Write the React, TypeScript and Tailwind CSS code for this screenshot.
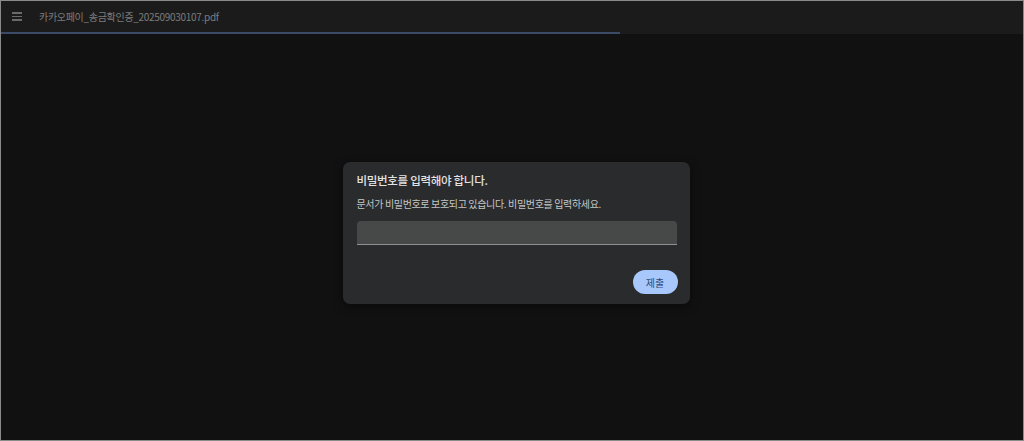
import { useState } from "react";

const font = { fontFamily: '"Noto Sans CJK KR", "Noto Sans", sans-serif' };

export default function App() {
  const [pw, setPw] = useState("");

  return (
    <div className="h-[441px] w-full overflow-hidden border border-[#8a8a8a] bg-[#111111]" style={font}>
      {/* toolbar */}
      <div className="relative h-[33px] bg-[#1b1b1b]">
        <div className="flex h-[31px] items-center">
          <button className="ml-[11px] flex h-[14px] w-[12px] flex-col justify-center gap-[2px]">
            <span className="h-[1.5px] w-[10px] bg-[#6a6a6a]" />
            <span className="h-[1.5px] w-[10px] bg-[#6a6a6a]" />
            <span className="h-[1.5px] w-[10px] bg-[#6a6a6a]" />
          </button>
          <span className="ml-[15px] text-[10px] tracking-[-0.3px] text-[#7d7d7d]">카카오페이_송금확인증_202509030107.pdf</span>
        </div>
        <div className="absolute bottom-0 left-0 h-[2px] w-[619px] bg-[#3b4a66]" />
      </div>

      {/* body */}
      <div className="flex h-[406px] justify-center pl-[8px] pt-[128px]">
        <div className="h-[142px] w-[347px] rounded-[7px] bg-[#2a2b2d] px-[14px] pt-[11px] shadow-[0_2px_10px_rgba(0,0,0,0.5)]">
          <h2 className="text-[11.5px] font-medium leading-[14px] tracking-[-0.3px] text-[#e3e3e3]">비밀번호를 입력해야 합니다.</h2>
          <p className="mt-[11px] text-[10px] leading-[12px] tracking-[-0.35px] text-[#c4c7c5]">문서가 비밀번호로 보호되고 있습니다. 비밀번호를 입력하세요.</p>
          <input
            type="password"
            value={pw}
            onChange={(e) => setPw(e.target.value)}
            className="mt-[11px] block h-[24px] w-[320px] rounded-t-[4px] border-b border-[#8e918f] bg-[#474948] px-2 text-[11px] text-[#e3e3e3] outline-none"
          />
          <div className="mt-[25px] flex justify-end">
            <button className="-mr-[2px] h-[24px] w-[45px] rounded-full bg-[#a8c7fa] text-[10px] text-[#2c4a7c]">제출</button>
          </div>
        </div>
      </div>
    </div>
  );
}
